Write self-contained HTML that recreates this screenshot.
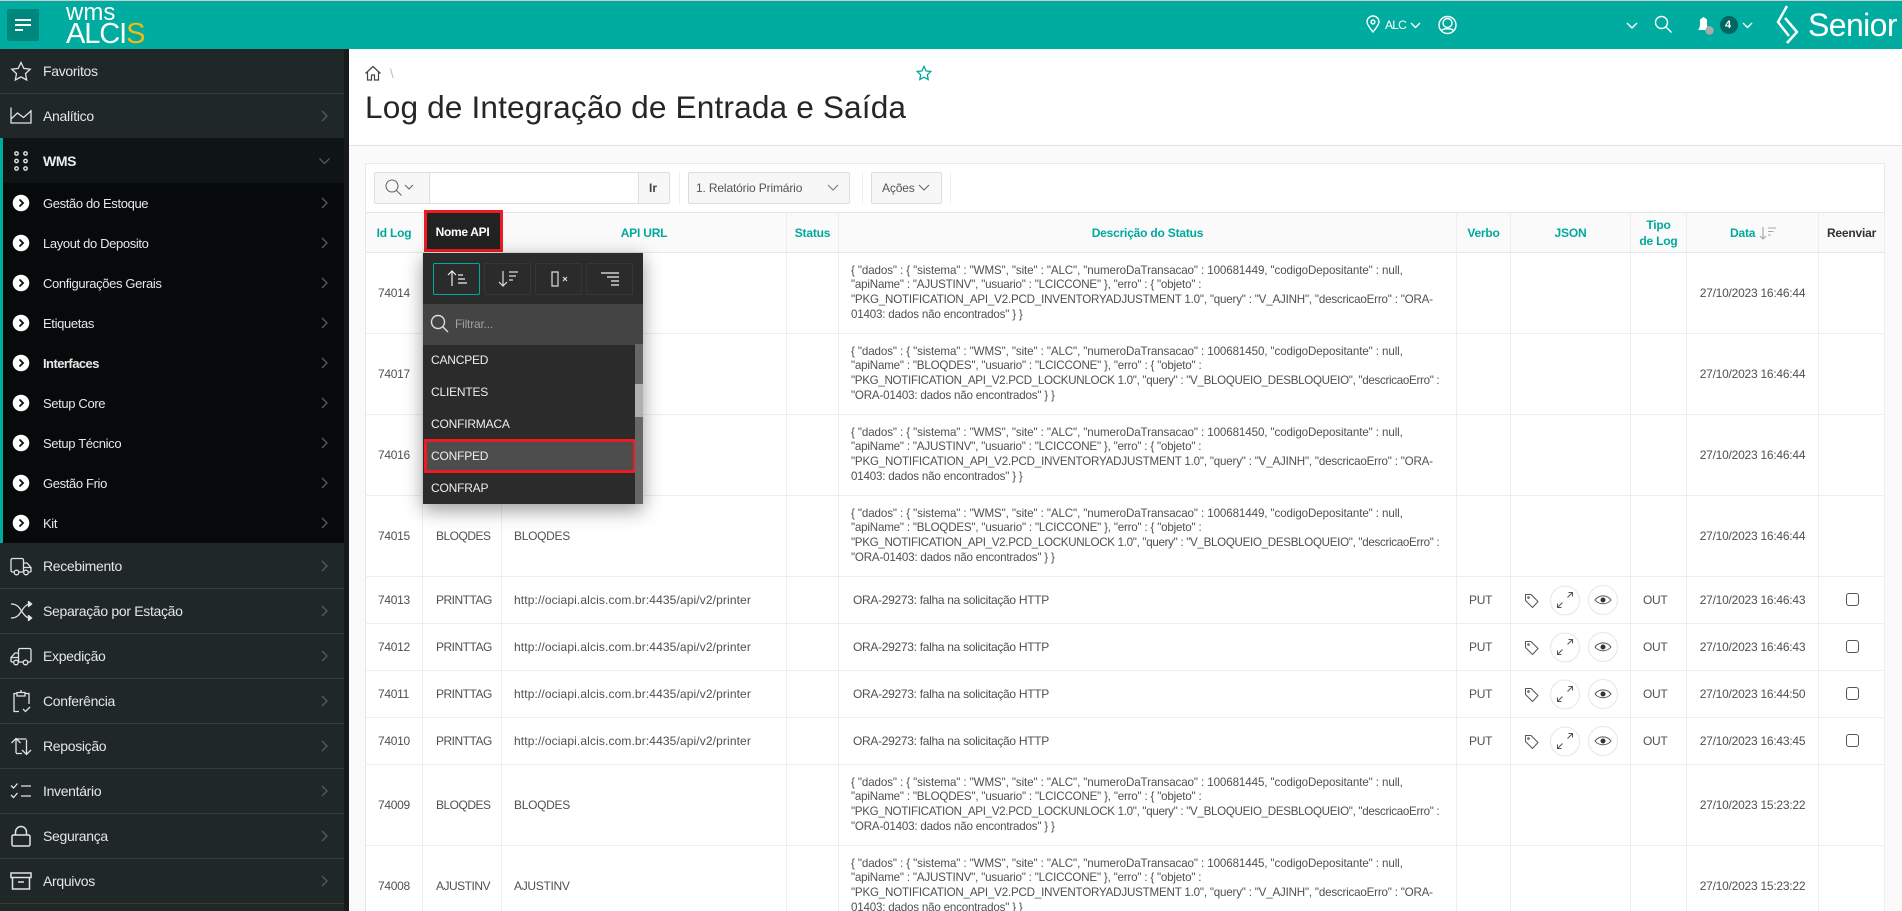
<!DOCTYPE html>
<html lang="pt"><head><meta charset="utf-8"><title>Log de Integração</title>
<style>
*{box-sizing:border-box}
html,body{margin:0;padding:0;width:1902px;height:911px;overflow:hidden;background:#fff;font-family:"Liberation Sans",sans-serif;color:#444}
#root{position:absolute;left:0;top:0;width:1902px;height:911px;overflow:hidden;background:#fff}
.a{position:absolute;white-space:nowrap}
#top{position:absolute;left:0;top:0;width:1902px;height:49px;background:#00ab9f;border-top:1px solid #ccc}
#side{position:absolute;left:0;top:49px;width:344px;height:862px;background:#1f2727}
#strip{position:absolute;left:344px;top:49px;width:5px;height:862px;background:#161a1a}
.m{position:absolute;left:0;width:344px;height:45px;line-height:44px;padding-left:43px;color:#e4e6e6;font-size:14px;letter-spacing:-.32px;border-bottom:1px solid #343b3b;white-space:nowrap}
.s{position:absolute;left:3px;width:341px;height:40px;line-height:41px;padding-left:40px;color:#e8e8e8;font-size:13px;letter-spacing:-.36px;white-space:nowrap}
#sub{position:absolute;left:0;top:138px;width:344px;height:405px;background:#060a0b;border-left:3px solid #00ab9f}
#wmsr{position:absolute;left:3px;top:138px;width:341px;height:45px;background:#0f1414}
table{position:absolute;left:365px;top:212px;width:1520px;border-collapse:separate;border-spacing:0;table-layout:fixed;font-size:12px;letter-spacing:-.3px}
td,th{border-right:1px solid #eee;border-bottom:1px solid #eee;padding:0;overflow:hidden;white-space:nowrap}
th{height:41px;background:#fafafa;color:#00a99d;font-size:12px;letter-spacing:-.2px;border-bottom:1px solid #e6e6e6;border-top:1px solid #e6e6e6;text-align:center;line-height:16px;font-weight:bold}
td{background:#fff;color:#505050}
td:first-child,th:first-child{border-left:1px solid #e6e6e6}
tr.t td{height:81px}
tr.n td{height:47px}
.l{padding-left:12px}
.nm{padding-left:13px;letter-spacing:-.5px}
.u{padding-left:12px;letter-spacing:.12px}
.o{padding-left:14px}
.c{text-align:center;letter-spacing:-.24px}
.d{padding-left:12px;line-height:14.6px;font-size:11.6px;letter-spacing:-.2px}
.L1{letter-spacing:-.11px}
.L3{letter-spacing:-.31px}
.ic{position:relative;height:46px}
.ic svg{position:absolute;left:0;top:0}
#pop{position:absolute;left:423px;top:252px;width:220px;height:252px;background:#2b2b2b;box-shadow:0 6px 18px rgba(0,0,0,.4);border-top:1px solid #ccc}
.pb{position:absolute;top:10px;height:32px;width:47px;border:1px solid #363636;border-radius:2px}
.pi{position:absolute;left:8px;font-size:12px;color:#eee;letter-spacing:-.2px;height:32px;line-height:33px}
</style></head><body>
<div id="root">

<div id="top"></div>
<div class="a" style="left:7px;top:9px;width:32px;height:32px;background:#00877d;border-radius:2px"></div>
<div class="a" style="left:15px;top:19px;width:16px;height:2px;background:#fff"></div>
<div class="a" style="left:15px;top:24px;width:16px;height:2px;background:#fff"></div>
<div class="a" style="left:15px;top:29px;width:8px;height:2px;background:#fff"></div>
<div class="a" style="left:66px;top:1px;font-size:24px;line-height:24px;color:#fff;letter-spacing:0">wms</div>
<div class="a" style="left:66px;top:18px;font-size:29px;line-height:33px;color:#fff;letter-spacing:-1.1px">ALCI<span style="color:#f4b90f">S</span></div>

<!-- header right -->
<svg class="a" style="left:1340px;top:0" width="562" height="49" fill="none" stroke="#fff" stroke-width="1.4">
<path d="M33 32C29 27 27 24 27 22a6 6 0 0 1 12 0C39 24 37 27 33 32Z"/><circle cx="33" cy="22" r="1.900"/>
<path d="M71 23l4.500 4.500 4.500-4.500"/>
<circle cx="107.500" cy="25" r="8.500"/><circle cx="107.500" cy="23" r="4.500"/><path d="M101 31c2-3 11-3 13 0"/>
<path d="M287 23l5 5 5-5"/>
<circle cx="321.500" cy="22.500" r="6"/><path d="M326 27l5.500 5.500"/>
<path d="M403 23l4.500 4.500 4.500-4.500"/>
<path d="M359 30h11c-2-2-2-5-2-8a3 3 0 0 0-2.500-4 1 1 0 0 0-2 0 3 3 0 0 0-2.500 4c0 3 0 6-2 8z" fill="#fff" stroke="none" transform="translate(-1,0)"/>
<circle cx="369.500" cy="30.500" r="4.200" fill="#aaa" stroke="none"/>
<circle cx="389" cy="25" r="9" fill="#00665f" stroke="none"/>
<path d="M447 6 L438 22 L449 36" stroke-width="2.500" stroke-linejoin="round"/>
<path d="M445 18 L457 32 L447 43" stroke-width="2.500" stroke-linejoin="round"/>
</svg>
<div class="a" style="left:1385px;top:18px;font-size:12px;line-height:15px;color:#fff;letter-spacing:-.8px">ALC</div>
<div class="a" style="left:1725px;top:19px;font-size:11px;line-height:13px;color:#fff;font-weight:bold">4</div>
<div class="a" style="left:1808px;top:3px;font-size:32px;line-height:44px;color:#fff;letter-spacing:-.6px">Senior</div>

<!-- sidebar -->
<div id="side"></div><div id="strip"></div>
<div class="m" style="top:49px">Favoritos</div>
<div class="m" style="top:94px">Analítico</div>
<div id="sub"></div><div id="wmsr"></div>
<div class="a" style="left:43px;top:139px;line-height:45px;font-size:14px;font-weight:bold;color:#eee;letter-spacing:-.4px">WMS</div>
<div class="s" style="top:183px">Gestão do Estoque</div>
<div class="s" style="top:223px">Layout do Deposito</div>
<div class="s" style="top:263px">Configurações Gerais</div>
<div class="s" style="top:303px">Etiquetas</div>
<div class="s" style="top:343px;font-weight:bold;letter-spacing:-.55px">Interfaces</div>
<div class="s" style="top:383px">Setup Core</div>
<div class="s" style="top:423px">Setup Técnico</div>
<div class="s" style="top:463px">Gestão Frio</div>
<div class="s" style="top:503px">Kit</div>
<div class="m" style="top:544px">Recebimento</div>
<div class="m" style="top:589px">Separação por Estação</div>
<div class="m" style="top:634px">Expedição</div>
<div class="m" style="top:679px">Conferência</div>
<div class="m" style="top:724px">Reposição</div>
<div class="m" style="top:769px">Inventário</div>
<div class="m" style="top:814px">Segurança</div>
<div class="m" style="top:859px">Arquivos</div>

<svg class="a" style="left:0;top:0" width="344" height="911" fill="none" stroke="#e0e3e3" stroke-width="1.3">
<!-- star -->
<path d="M21 62.500l2.800 5.900 6.400.8-4.700 4.400 1.200 6.400-5.700-3.100-5.700 3.100 1.200-6.400-4.700-4.400 6.400-.8z"/>
<!-- chart -->
<path d="M11 107.500V123H31V110M11 119l6.500-6 6 4.500 7.500-6.500"/>
<!-- wms dots -->
<g stroke-width="1.4"><circle cx="16.500" cy="153.500" r="1.700"/><circle cx="25.500" cy="153.500" r="1.700"/><circle cx="16.500" cy="161" r="1.700"/><circle cx="25.500" cy="161" r="1.700"/><circle cx="16.500" cy="168.500" r="1.700"/><circle cx="25.500" cy="168.500" r="1.700"/></g>
<!-- sub bullets -->
<g stroke="none" fill="#fff"><circle cx="21" cy="203" r="8.300"/><circle cx="21" cy="243" r="8.300"/><circle cx="21" cy="283" r="8.300"/><circle cx="21" cy="323" r="8.300"/><circle cx="21" cy="363" r="8.300"/><circle cx="21" cy="403" r="8.300"/><circle cx="21" cy="443" r="8.300"/><circle cx="21" cy="483" r="8.300"/><circle cx="21" cy="523" r="8.300"/></g>
<g stroke="#0a0e0e" stroke-width="1.800"><path d="M19.500 199.500l3.500 3.500-3.500 3.500M19.500 239.500l3.500 3.500-3.500 3.500M19.500 279.500l3.500 3.500-3.500 3.500M19.500 319.500l3.500 3.500-3.500 3.500M19.500 359.500l3.500 3.500-3.500 3.500M19.500 399.500l3.500 3.500-3.500 3.500M19.500 439.500l3.500 3.500-3.500 3.500M19.500 479.500l3.500 3.500-3.500 3.500M19.500 519.500l3.500 3.500-3.500 3.500"/></g>
<!-- chevrons -->
<g stroke="#555c5c" stroke-width="1.300">
<path d="M322 111l5 5-5 5M319.500 158.500l5 5 5-5M322 198l5 5-5 5M322 238l5 5-5 5M322 278l5 5-5 5M322 318l5 5-5 5M322 358l5 5-5 5M322 398l5 5-5 5M322 438l5 5-5 5M322 478l5 5-5 5M322 518l5 5-5 5M322 561l5 5-5 5M322 606l5 5-5 5M322 651l5 5-5 5M322 696l5 5-5 5M322 741l5 5-5 5M322 786l5 5-5 5M322 831l5 5-5 5M322 876l5 5-5 5"/></g>
<!-- recebimento -->
<path d="M14 572h-1.500a1.500 1.500 0 0 1-1.500-1.500V560a1.500 1.500 0 0 1 1.500-1.500H22a1.500 1.500 0 0 1 1.500 1.500v12M19 572h4M23.500 563h3.500l4 4.500V571a1 1 0 0 1-1 1h-1.500M23.500 567.500H31"/><circle cx="16.500" cy="572.500" r="2.300"/><circle cx="26" cy="572.500" r="2.300"/>
<!-- shuffle -->
<path d="M11 604c6 0 8 3 10.500 7s5 7 8 7M11 618c6 0 8-3 10.500-7s5-7 8-7"/><path d="M28.500 601.500l3.200 2.500-3.200 2.500zM28.500 615.500l3.200 2.500-3.200 2.500z" fill="#e0e3e3" stroke-linejoin="round"/>
<!-- expedicao -->
<path d="M28 662h1.500a1.500 1.500 0 0 0 1.500-1.500V650a1.500 1.500 0 0 0-1.500-1.500H20a1.500 1.500 0 0 0-1.500 1.500v12M23 662h-4M18.500 653H15l-4 4.500V661a1 1 0 0 0 1 1h1.500M18.500 657.500H11"/><circle cx="16" cy="662.500" r="2.300"/><circle cx="25.500" cy="662.500" r="2.300"/>
<!-- conferencia -->
<path d="M17 693.500h-3v18h5M25 693.500h4V704"/><path d="M17 692.500h8v3.500h-8zM20 691h2" /><path d="M23 709l2.500 2.500 4.500-4.500"/>
<!-- reposicao -->
<path transform="translate(0,-2)" d="M16 755v-14.500M11.500 745l4.500-4.500 4.500 4.500M26.500 742v14.500M22 752l4.500 4.500 4.500-4.500M16 741h10.500M16 755.500h6"/>
<!-- inventario -->
<path d="M11 785.500l2.500 2.500 4-4.500M11 795l2.500 2.500 4-4.500M21 786h10M21 796h10"/>
<!-- lock -->
<path d="M13.500 835h15a1.500 1.500 0 0 1 1.500 1.500v8a1.500 1.500 0 0 1-1.500 1.500h-15a1.500 1.500 0 0 1-1.500-1.500v-8a1.500 1.500 0 0 1 1.500-1.500zM15.500 835v-3a5.500 5.500 0 0 1 11 0v3" stroke-width="1.500"/>
<!-- archive -->
<path d="M11 873h20v4.500H11zM12.500 877.500V889h17v-11.500M18 882h6" stroke-width="1.500"/>
</svg>

<!-- page head -->
<svg class="a" style="left:364px;top:65px" width="20" height="16" viewBox="0 0 20 16" fill="none" stroke="#444" stroke-width="1.200"><path d="M1.500 8.500L9 1.500l7.500 7M3.500 7v8H7.500V10h3v5h4V7"/></svg>
<div class="a" style="left:390px;top:66px;font-size:13px;line-height:15px;color:#bbb">\</div>
<svg class="a" style="left:916px;top:65px" width="16" height="16" viewBox="0 0 16 16" fill="none" stroke="#00a99d" stroke-width="1.300"><path d="M8 1.500l2 4.400 4.800.6-3.500 3.300.9 4.700L8 12.200l-4.200 2.300.9-4.700-3.500-3.300 4.800-.6z"/></svg>
<div class="a" style="left:365px;top:88px;font-size:31.600px;line-height:38px;color:#262626;letter-spacing:.15px">Log de Integração de Entrada e Saída</div>
<div class="a" style="left:349px;top:145px;width:1553px;height:1px;background:#e3e3e3"></div>
<div class="a" style="left:349px;top:146px;width:1553px;height:765px;background:#fafafa"></div>
<div class="a" style="left:365px;top:163px;width:1520px;height:748px;background:#fff;border:1px solid #e8e8e8"></div>

<!-- toolbar -->
<div class="a" style="left:374px;top:172px;width:296px;height:32px;background:#f7f7f7;border:1px solid #ddd;border-radius:2px"></div>
<div class="a" style="left:429px;top:173px;width:210px;height:30px;background:#fff;border-left:1px solid #ddd;border-right:1px solid #ddd"></div>
<svg class="a" style="left:384px;top:178px" width="32" height="20" fill="none" stroke="#666" stroke-width="1.100"><circle cx="8" cy="8" r="6"/><path d="M12.500 12.500l5 5M21 7l4 4 4-4"/></svg>
<div class="a" style="left:649px;top:172px;line-height:32px;font-size:12px;font-weight:bold;color:#444;">Ir</div>
<div class="a" style="left:679px;top:172px;width:1px;height:32px;background:#eee"></div>
<div class="a" style="left:688px;top:172px;width:162px;height:32px;background:#f7f7f7;border:1px solid #ddd;border-radius:2px"></div>
<div class="a" style="left:696px;top:172px;line-height:32px;font-size:12px;color:#555;letter-spacing:-.15px">1. Relatório Primário</div>
<svg class="a" style="left:826px;top:182px" width="14" height="12" fill="none" stroke="#777" stroke-width="1.100"><path d="M2 3l5 5 5-5"/></svg>
<div class="a" style="left:862px;top:172px;width:1px;height:32px;background:#eee"></div>
<div class="a" style="left:871px;top:172px;width:71px;height:32px;background:#f7f7f7;border:1px solid #ddd;border-radius:2px"></div>
<div class="a" style="left:882px;top:172px;line-height:32px;font-size:12px;color:#555;letter-spacing:-.15px">Ações</div>
<svg class="a" style="left:917px;top:182px" width="14" height="12" fill="none" stroke="#666" stroke-width="1.100"><path d="M2 3l5 5 5-5"/></svg>
<div class="a" style="left:950px;top:172px;width:1px;height:32px;background:#eee"></div>

<!-- table -->
<table>
<colgroup><col style="width:58px"><col style="width:79px"><col style="width:285px"><col style="width:52px"><col style="width:618px"><col style="width:54px"><col style="width:120px"><col style="width:56px"><col style="width:132px"><col style="width:66px"></colgroup>
<tr><th>Id Log</th><th></th><th>API URL</th><th>Status</th><th>Descrição do Status</th><th>Verbo</th><th>JSON</th><th>Tipo<br>de Log</th><th style="text-align:left;padding-left:43px">Data<svg width="24" height="14" style="margin-left:4px;vertical-align:-3px" fill="none" stroke="#a5a5a5" stroke-width="1.100"><path d="M4 1v12M1 10l3 3 3-3M9 2h8M9 5.500h5.500M9 9h3"/></svg></th><th style="color:#333">Reenviar</th></tr>
<tr class="t"><td class="l">74014</td><td class="nm">AJUSTINV</td><td class="l">AJUSTINV</td><td></td><td class="d"><span class="L1">{ "dados" : { "sistema" : "WMS", "site" : "ALC", "numeroDaTransacao" : 100681449, "codigoDepositante" : null,</span><br>"apiName" : "AJUSTINV", "usuario" : "LCICCONE" }, "erro" : { "objeto" :<br>"PKG_NOTIFICATION_API_V2.PCD_INVENTORYADJUSTMENT 1.0", "query" : "V_AJINH", "descricaoErro" : "ORA-<br>01403: dados não encontrados" } }</td><td></td><td></td><td></td><td class="c">27/10/2023 16:46:44</td><td></td></tr>
<tr class="t"><td class="l">74017</td><td class="nm">BLOQDES</td><td class="l">BLOQDES</td><td></td><td class="d"><span class="L1">{ "dados" : { "sistema" : "WMS", "site" : "ALC", "numeroDaTransacao" : 100681450, "codigoDepositante" : null,</span><br>"apiName" : "BLOQDES", "usuario" : "LCICCONE" }, "erro" : { "objeto" :<br><span class="L3">"PKG_NOTIFICATION_API_V2.PCD_LOCKUNLOCK 1.0", "query" : "V_BLOQUEIO_DESBLOQUEIO", "descricaoErro" :</span><br>"ORA-01403: dados não encontrados" } }</td><td></td><td></td><td></td><td class="c">27/10/2023 16:46:44</td><td></td></tr>
<tr class="t"><td class="l">74016</td><td class="nm">AJUSTINV</td><td class="l">AJUSTINV</td><td></td><td class="d"><span class="L1">{ "dados" : { "sistema" : "WMS", "site" : "ALC", "numeroDaTransacao" : 100681450, "codigoDepositante" : null,</span><br>"apiName" : "AJUSTINV", "usuario" : "LCICCONE" }, "erro" : { "objeto" :<br>"PKG_NOTIFICATION_API_V2.PCD_INVENTORYADJUSTMENT 1.0", "query" : "V_AJINH", "descricaoErro" : "ORA-<br>01403: dados não encontrados" } }</td><td></td><td></td><td></td><td class="c">27/10/2023 16:46:44</td><td></td></tr>
<tr class="t"><td class="l">74015</td><td class="nm">BLOQDES</td><td class="l">BLOQDES</td><td></td><td class="d"><span class="L1">{ "dados" : { "sistema" : "WMS", "site" : "ALC", "numeroDaTransacao" : 100681449, "codigoDepositante" : null,</span><br>"apiName" : "BLOQDES", "usuario" : "LCICCONE" }, "erro" : { "objeto" :<br><span class="L3">"PKG_NOTIFICATION_API_V2.PCD_LOCKUNLOCK 1.0", "query" : "V_BLOQUEIO_DESBLOQUEIO", "descricaoErro" :</span><br>"ORA-01403: dados não encontrados" } }</td><td></td><td></td><td></td><td class="c">27/10/2023 16:46:44</td><td></td></tr>
<tr class="n"><td class="l">74013</td><td class="nm">PRINTTAG</td><td class="u">http://ociapi.alcis.com.br:4435/api/v2/printer</td><td></td><td class="o">ORA-29273: falha na solicitação HTTP</td><td class="l">PUT</td><td><div class="ic"><svg width="120" height="47"><use href="#jsonicons"/></svg></div></td><td class="l">OUT</td><td class="c">27/10/2023 16:46:43</td><td><div class="ic"><svg width="66" height="47"><use href="#chk"/></svg></div></td></tr>
<tr class="n"><td class="l">74012</td><td class="nm">PRINTTAG</td><td class="u">http://ociapi.alcis.com.br:4435/api/v2/printer</td><td></td><td class="o">ORA-29273: falha na solicitação HTTP</td><td class="l">PUT</td><td><div class="ic"><svg width="120" height="47"><use href="#jsonicons"/></svg></div></td><td class="l">OUT</td><td class="c">27/10/2023 16:46:43</td><td><div class="ic"><svg width="66" height="47"><use href="#chk"/></svg></div></td></tr>
<tr class="n"><td class="l">74011</td><td class="nm">PRINTTAG</td><td class="u">http://ociapi.alcis.com.br:4435/api/v2/printer</td><td></td><td class="o">ORA-29273: falha na solicitação HTTP</td><td class="l">PUT</td><td><div class="ic"><svg width="120" height="47"><use href="#jsonicons"/></svg></div></td><td class="l">OUT</td><td class="c">27/10/2023 16:44:50</td><td><div class="ic"><svg width="66" height="47"><use href="#chk"/></svg></div></td></tr>
<tr class="n"><td class="l">74010</td><td class="nm">PRINTTAG</td><td class="u">http://ociapi.alcis.com.br:4435/api/v2/printer</td><td></td><td class="o">ORA-29273: falha na solicitação HTTP</td><td class="l">PUT</td><td><div class="ic"><svg width="120" height="47"><use href="#jsonicons"/></svg></div></td><td class="l">OUT</td><td class="c">27/10/2023 16:43:45</td><td><div class="ic"><svg width="66" height="47"><use href="#chk"/></svg></div></td></tr>
<tr class="t"><td class="l">74009</td><td class="nm">BLOQDES</td><td class="l">BLOQDES</td><td></td><td class="d"><span class="L1">{ "dados" : { "sistema" : "WMS", "site" : "ALC", "numeroDaTransacao" : 100681445, "codigoDepositante" : null,</span><br>"apiName" : "BLOQDES", "usuario" : "LCICCONE" }, "erro" : { "objeto" :<br><span class="L3">"PKG_NOTIFICATION_API_V2.PCD_LOCKUNLOCK 1.0", "query" : "V_BLOQUEIO_DESBLOQUEIO", "descricaoErro" :</span><br>"ORA-01403: dados não encontrados" } }</td><td></td><td></td><td></td><td class="c">27/10/2023 15:23:22</td><td></td></tr>
<tr class="t"><td class="l">74008</td><td class="nm">AJUSTINV</td><td class="l">AJUSTINV</td><td></td><td class="d"><span class="L1">{ "dados" : { "sistema" : "WMS", "site" : "ALC", "numeroDaTransacao" : 100681445, "codigoDepositante" : null,</span><br>"apiName" : "AJUSTINV", "usuario" : "LCICCONE" }, "erro" : { "objeto" :<br>"PKG_NOTIFICATION_API_V2.PCD_INVENTORYADJUSTMENT 1.0", "query" : "V_AJINH", "descricaoErro" : "ORA-<br>01403: dados não encontrados" } }</td><td></td><td></td><td></td><td class="c">27/10/2023 15:23:22</td><td></td></tr>
</table>
<svg width="0" height="0" style="position:absolute"><defs>
<g id="jsonicons" fill="none" stroke="#555" stroke-width="1">
<path d="M14.500 17.500h5.500l7 7-5.500 6-7-7z" stroke-linejoin="round"/><circle cx="17.500" cy="20.500" r=".8"/>
<circle cx="54" cy="23.500" r="14.500" stroke="#e6e6e6"/><circle cx="92" cy="23" r="14.500" stroke="#e6e6e6"/>
<path d="M56.500 20.500l5-5M57.500 15.500h4v4M51.500 25.500l-5 5M46.500 26.500v4h4"/>
<path d="M84 23c4-5.500 12-5.500 16 0-4 5-12 5-16 0z"/><circle cx="92" cy="23" r="2.500" fill="#333" stroke="none"/>
</g>
<g id="chk"><rect x="27.500" y="16.500" width="12" height="12" rx="2.500" fill="#fff" stroke="#555" stroke-width="1"/></g>
</defs></svg>

<!-- nome api header -->
<div class="a" style="left:424px;top:210px;width:79px;height:42px;background:#222;border:3px solid #ed1c24;color:#fff;font-size:12px;font-weight:bold;text-align:center;line-height:38px;letter-spacing:-.3px;text-indent:-2px">Nome API</div>

<!-- popup -->
<div id="pop">
<div class="pb" style="left:10px;border-color:#00a99d"></div><div class="pb" style="left:61px"></div><div class="pb" style="left:112px"></div><div class="pb" style="left:163px"></div>
<svg class="a" style="left:0;top:0" width="220" height="52" fill="none" stroke="#eee" stroke-width="1.200">
<path d="M29 33V18M25 22l4-4 4 4M35 22h5M35 26h7M35 30h9"/>
<path d="M80 18V33M76 29l4 4 4-4M86 19h9M86 23h7M86 27h4" stroke="#ddd"/>
<path d="M129 19h6v14h-6zM140 24l4 4M144 24l-4 4" stroke="#ddd"/>
<path d="M178 20h18M184 24h12M188 28h8M188 32h8" stroke="#eee"/>
</svg>
<div class="a" style="left:0;top:51px;width:220px;height:41px;background:#444"></div>
<svg class="a" style="left:7px;top:60px" width="20" height="20" fill="none" stroke="#ddd" stroke-width="1.400"><circle cx="8" cy="9" r="6.500"/><path d="M13 14l5 5"/></svg>
<div class="a" style="left:32px;top:51px;line-height:40px;font-size:12px;color:#a0a0a0;letter-spacing:-.2px">Filtrar...</div>
<div class="pi" style="top:91px">CANCPED</div>
<div class="pi" style="top:123px">CLIENTES</div>
<div class="pi" style="top:155px">CONFIRMACA</div>
<div class="a" style="left:1px;top:186px;width:212px;height:34px;background:#4d4d4d;border:3px solid #ed1c24"></div>
<div class="pi" style="top:187px">CONFPED</div>
<div class="pi" style="top:219px">CONFRAP</div>
<div class="a" style="left:212px;top:91px;width:8px;height:160px;background:#676767"></div>
<div class="a" style="left:212px;top:131px;width:8px;height:33px;background:#b0b0b0"></div>
</div>
</div>
</body></html>
